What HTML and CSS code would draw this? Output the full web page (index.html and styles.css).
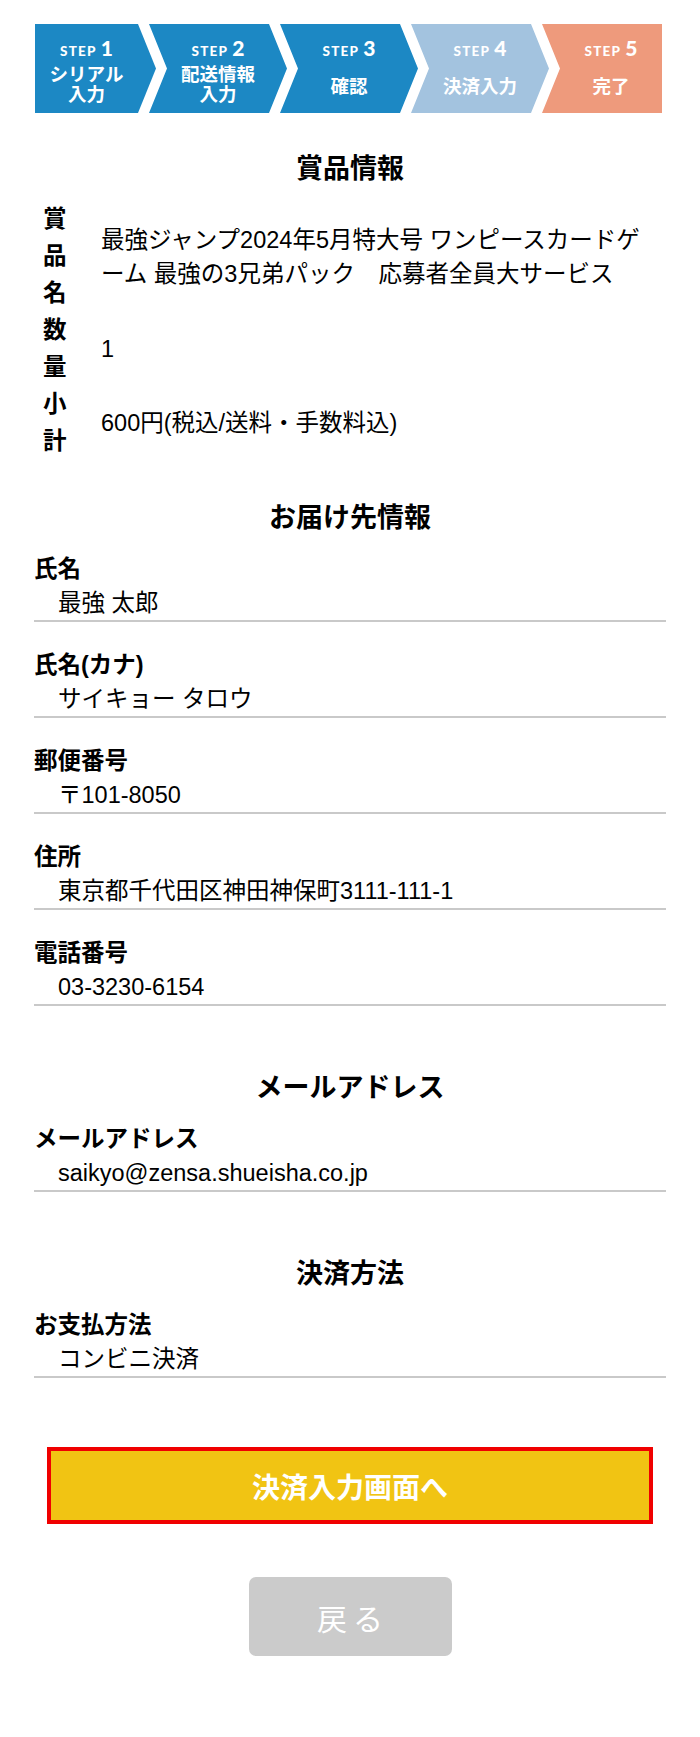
FILE: index.html
```html
<!DOCTYPE html>
<html lang="ja">
<head>
<meta charset="utf-8">
<title>確認</title>
<link rel="stylesheet" href="styles.css">
</head>
<body>
<div class="page">
  <ol class="steps">
    <li class="step step-first step-done"><span class="step-no">STEP <b>1</b></span><span class="step-name">シリアル</span><span class="step-name step-name-2">入力</span></li>
    <li class="step step-done"><span class="step-no">STEP <b>2</b></span><span class="step-name">配送情報</span><span class="step-name step-name-2">入力</span></li>
    <li class="step step-done"><span class="step-no">STEP <b>3</b></span><span class="step-name step-name-single">確認</span></li>
    <li class="step step-todo"><span class="step-no">STEP <b>4</b></span><span class="step-name step-name-single">決済入力</span></li>
    <li class="step step-last step-end"><span class="step-no">STEP <b>5</b></span><span class="step-name step-name-single">完了</span></li>
  </ol>

  <section class="sec sec-product">
    <h2 class="sec-title">賞品情報</h2>
    <div class="prize">
      <div class="prize-row">
        <div class="prize-label">賞品名</div>
        <div class="prize-value">最強ジャンプ2024年5月特大号 ワンピースカードゲ<br>ーム 最強の3兄弟パック　応募者全員大サービス</div>
      </div>
      <div class="prize-row">
        <div class="prize-label">数量</div>
        <div class="prize-value">1</div>
      </div>
      <div class="prize-row">
        <div class="prize-label">小計</div>
        <div class="prize-value">600円(税込/送料・手数料込)</div>
      </div>
    </div>
  </section>

  <section class="sec sec-delivery">
    <h2 class="sec-title">お届け先情報</h2>
    <div class="fields">
      <div class="field"><div class="field-label">氏名</div><div class="field-value">最強 太郎</div></div>
      <div class="field"><div class="field-label">氏名(カナ)</div><div class="field-value">サイキョー タロウ</div></div>
      <div class="field"><div class="field-label">郵便番号</div><div class="field-value">〒101-8050</div></div>
      <div class="field"><div class="field-label">住所</div><div class="field-value">東京都千代田区神田神保町3111-111-1</div></div>
      <div class="field"><div class="field-label">電話番号</div><div class="field-value">03-3230-6154</div></div>
    </div>
  </section>

  <section class="sec sec-more">
    <h2 class="sec-title">メールアドレス</h2>
    <div class="fields">
      <div class="field"><div class="field-label">メールアドレス</div><div class="field-value">saikyo@zensa.shueisha.co.jp</div></div>
    </div>
  </section>

  <section class="sec sec-more">
    <h2 class="sec-title">決済方法</h2>
    <div class="fields">
      <div class="field"><div class="field-label">お支払方法</div><div class="field-value">コンビニ決済</div></div>
    </div>
  </section>

  <div class="actions">
    <button class="btn-next" type="button">決済入力画面へ</button>
    <button class="btn-back" type="button">戻る</button>
  </div>
</div>
</body>
</html>
```
FILE: styles.css
```css
html, body {
  margin: 0;
  padding: 0;
  background: #fff;
}

body {
  font-family: "Liberation Sans", "Noto Sans CJK JP", sans-serif;
  color: #000;
}

.page {
  padding: 24px 34px 77px;
}

/* ---- step bar ---- */
.steps {
  display: flex;
  list-style: none;
  margin: 0;
  padding: 0 0 0 1px;
  height: 89px;
}

.step {
  flex: none;
  box-sizing: border-box;
  width: 138px;
  height: 89px;
  margin-left: -7px;
  padding: 14px 18px 0 18px;
  clip-path: polygon(0 0, 120px 0, 138px 50%, 120px 100%, 0 100%, 18px 50%);
  color: #fff;
  display: flex;
  flex-direction: column;
  align-items: center;
  text-align: center;
}

.step-first {
  width: 121px;
  margin-left: 0;
  padding: 14px 18px 0 0;
  clip-path: polygon(0 0, 103px 0, 121px 50%, 103px 100%, 0 100%);
}

.step-last {
  width: 120px;
  padding: 14px 0 0 18px;
  clip-path: polygon(0 0, 100% 0, 100% 100%, 0 100%, 18px 50%);
}

.step-done { background: #1c88c4; }
.step-todo { background: #a3c3df; }
.step-end { background: #ee9a7c; }

.step-no {
  font-family: Lato, "Liberation Sans", sans-serif;
  font-weight: 900;
  font-size: 13.5px;
  line-height: 20px;
  letter-spacing: 1.2px;
  white-space: nowrap;
}

.step-no b {
  font-size: 21px;
  font-weight: 900;
  letter-spacing: 0;
}

.step-name {
  font-family: "Noto Sans CJK JP", sans-serif;
  font-weight: 700;
  font-size: 18.5px;
  line-height: 20px;
  margin-top: 2px;
  white-space: nowrap;
}

.step-name-2 {
  margin-top: 0;
}

.step-name-single {
  margin-top: 14px;
}

/* ---- sections ---- */
.sec-title {
  margin: 0;
  text-align: center;
  font-size: 27px;
  line-height: 36px;
  font-weight: 700;
}

.sec-product .sec-title { margin-top: 38px; }
.sec-delivery .sec-title { margin-top: 40px; }
.sec-more .sec-title { margin-top: 64px; }

/* ---- prize table ---- */
.prize {
  margin-top: 14px;
}

.prize-row {
  display: grid;
  grid-template-columns: 24px 1fr;
  column-gap: 34px;
  align-items: center;
  padding-left: 9px;
}

.prize-label {
  font-weight: 700;
  font-size: 23.5px;
  line-height: 37px;
  word-break: break-all;
}

.prize-value {
  font-size: 23.5px;
  line-height: 34px;
  padding-right: 20px;
}

/* ---- fields ---- */
.fields {
  margin-top: 16px;
  display: flex;
  flex-direction: column;
  gap: 26px;
}

.field {
  border-bottom: 2px solid #c9c9c9;
}

.field-label {
  font-weight: 700;
  font-size: 23.5px;
  line-height: 34px;
}

.field-value {
  font-size: 23.5px;
  line-height: 34px;
  padding-left: 24px;
}

/* ---- buttons ---- */
.actions {
  display: flex;
  flex-direction: column;
  align-items: center;
  margin-top: 69px;
}

.btn-next {
  box-sizing: border-box;
  width: 606px;
  height: 77px;
  border: 4px solid #f00000;
  background: #f1c413;
  color: #fff;
  font-family: "Noto Sans CJK JP", sans-serif;
  font-weight: 700;
  font-size: 28px;
  line-height: 1;
  padding: 0;
}

.btn-back {
  box-sizing: border-box;
  width: 203px;
  height: 79px;
  margin-top: 53px;
  border: 0;
  border-radius: 7px;
  background: #cbcbcb;
  color: #fff;
  font-family: "Noto Sans CJK JP", sans-serif;
  font-weight: 400;
  font-size: 30px;
  line-height: 1;
  letter-spacing: 6px;
  padding: 0 0 0 6px;
}
```
